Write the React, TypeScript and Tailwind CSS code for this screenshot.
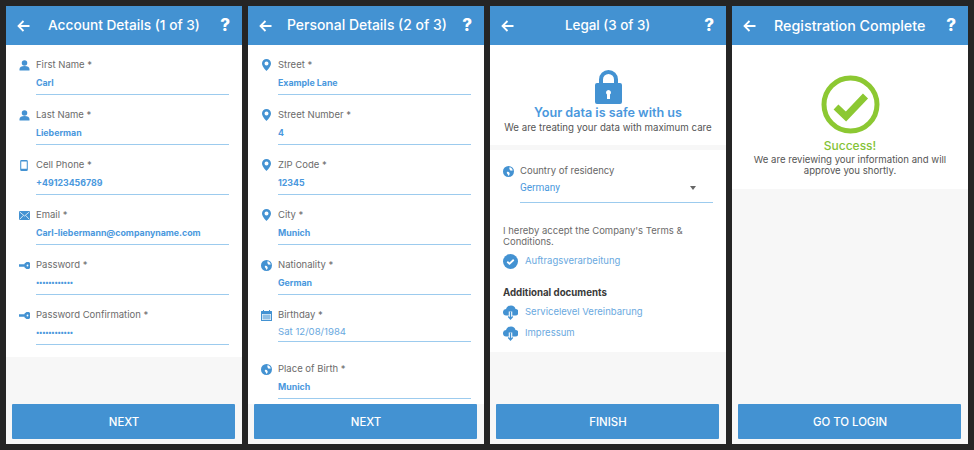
import React from "react";

const font = { fontFamily: "Inter, 'Noto Sans', sans-serif" };

const I = ({ children, w = 12, h = 12, vb = "0 0 24 24" }: { children: React.ReactNode; w?: number; h?: number; vb?: string }) => (
  <svg width={w} height={h} viewBox={vb} fill="#4392d2">{children}</svg>
);

const Person = () => (
  <I w={11} h={11} vb="0 0 22 22">
    <circle cx="11" cy="6" r="5.500" />
    <path d="M1 21v-3c0-4 4-6 10-6s10 2 10 6v3z" />
  </I>
);
const Phone = () => (
  <I w={8} h={11} vb="0 0 18 26">
    <path fillRule="evenodd" d="M3 0h12a3 3 0 0 1 3 3v20a3 3 0 0 1-3 3H3a3 3 0 0 1-3-3V3a3 3 0 0 1 3-3zm-.5 3.500v17h13v-17z" />
  </I>
);
const Mail = () => (
  <I w={11} h={9} vb="0 0 22 18">
    <rect width="22" height="18" rx="1.500" />
    <path d="M1.500 2 11 10l9.500-8M1.500 16.500l7-7.500M20.500 16.500l-7-7.500" fill="none" stroke="#fff" strokeWidth="1.500" />
  </I>
);
const Key = () => (
  <I w={11} h={7} vb="0 0 22 14">
    <path d="M0 4.500h11V3l4-3h5l2 2v10l-2 2h-5l-4-3V9.500H0z" />
    <circle cx="17" cy="7" r="1.800" fill="#fff" />
  </I>
);
const Pin = () => (
  <I w={9} h={12} vb="0 0 18 24">
    <path fillRule="evenodd" d="M9 0a9 9 0 0 1 9 9c0 6-9 15-9 15S0 15 0 9a9 9 0 0 1 9-9zm0 5a4 4 0 1 0 0 8 4 4 0 0 0 0-8z" />
  </I>
);
const Globe = () => (
  <I w={11} h={11} vb="0 0 22 22">
    <circle cx="11" cy="11" r="11" />
    <path d="M13 2.500c3 .5 6 3 6.500 6.500-2-.5-3 1-4.500 0s-3-3-2-6.500zM8 12c2-1 4 0 5 2s0 4-2 6c-1-2-1-3-2-4s-2-2-1-4z" fill="#fff" />
  </I>
);
const Calendar = () => (
  <I w={11} h={11} vb="0 0 22 22">
    <path fillRule="evenodd" d="M4 0h2v2h10V0h2v2h3a1 1 0 0 1 1 1v18a1 1 0 0 1-1 1H1a1 1 0 0 1-1-1V3a1 1 0 0 1 1-1h3zM2 8v12h18V8z" />
    <path d="M3 9h16v10H3z" opacity=".6" />
  </I>
);
const Check = () => (
  <svg width={15} height={15} viewBox="0 0 30 30">
    <circle cx="15" cy="15" r="15" fill="#4392d2" />
    <path d="M8.500 15.500l4.500 4 8.500-8" fill="none" stroke="#fff" strokeWidth="3.500" />
  </svg>
);
const Cloud = () => (
  <svg width={15} height={15} viewBox="0 0 30 30">
    <path d="M7 21a6.500 6.500 0 0 1-1-13C8 3 12 1 16 1c5 0 8 3 9 7a6.500 6.500 0 0 1-1 13z" fill="#4392d2" />
    <path d="M15 13v16" stroke="#fff" strokeWidth="7" />
    <path d="M15 13v15M10.500 23l4.500 5 4.500-5" stroke="#4392d2" strokeWidth="2.600" fill="none" />
  </svg>
);

const Field = ({ icon, label, value, dots }: { icon: React.ReactNode; label: string; value: string; dots?: boolean }) => (
  <div className="flex mb-[12px] pr-[13px]">
    <div className="w-[30px] h-4 flex items-center justify-center pl-[6px] shrink-0">{icon}</div>
    <div className="flex-1">
      <div className="h-4 text-[9.500px] leading-4 text-[#6b6b6b]">{label}</div>
      <div className={`h-[21px] leading-[19px] font-bold text-[#4a98dd] ${dots ? "text-[7px] tracking-[-0.25px]" : "text-[8.800px]"}`}>{value}</div>
      <div className="h-px bg-[#9ccbee]" />
    </div>
  </div>
);

const Header = ({ title, back = true, titleClass }: { title: string; back?: boolean; titleClass: string }) => (
  <div className="h-[39px] bg-[#4392d2] shrink-0 flex items-center text-white">
    <div className="w-[34px] flex justify-center shrink-0">
      {back && (
        <svg width="13" height="12" viewBox="0 0 13 12" fill="none" stroke="#fff" strokeWidth="1.800">
          <path d="M12.500 6H1.500M6.500 1 1.500 6l5 5" />
        </svg>
      )}
    </div>
    <div className={`font-medium whitespace-nowrap ${titleClass}`}>{title}</div>
    <div className="ml-auto mr-[12px] text-[17px] font-extrabold">?</div>
  </div>
);

const Panel = ({ header, footer, children }: { header: React.ReactNode; footer: string; children: React.ReactNode }) => (
  <div className="w-[236px] h-[438px] flex flex-col bg-[#f7f7f7] overflow-hidden">
    {header}
    <div className="flex-1 min-h-0 overflow-hidden">{children}</div>
    <div className="h-[40px] shrink-0 pl-[6px] pr-[7px]">
      <button className="w-full h-[35px] pl-px pt-[2px] bg-[#4392d2] rounded-[1px] text-white text-[11.400px] font-medium">{footer}</button>
    </div>
  </div>
);

const Legal = () => (
  <>
    <div className="bg-white h-[100px] flex flex-col items-center pt-[25px]">
      <svg width="27" height="34" viewBox="0 0 27 34">
        <path d="M6 15V9.500a7.500 7.500 0 0 1 15 0V15" fill="none" stroke="#4392d2" strokeWidth="4" />
        <path fillRule="evenodd" d="M2 13h23a2 2 0 0 1 2 2v17a2 2 0 0 1-2 2H2a2 2 0 0 1-2-2V15a2 2 0 0 1 2-2zm11.500 7a2.500 2.500 0 0 0-1.500 4.500V29h3v-4.500a2.500 2.500 0 0 0-1.500-4.500z" fill="#4392d2" />
      </svg>
      <div className="text-[12.600px] leading-4 mt-[1px] font-semibold text-[#4a98dd]">Your data is safe with us</div>
      <div className="text-[9.700px] leading-[14px] text-[#555]">We are treating your data with maximum care</div>
    </div>
    <div className="bg-white h-[202px] mt-[5px] px-[13px]">
      <div className="flex items-center pt-[13px] h-[29px]">
        <div className="w-[17px] shrink-0"><Globe /></div>
        <div className="text-[9.500px] text-[#666]">Country of residency</div>
      </div>
      <div className="ml-[17px] h-[24px] border-b border-[#9ccbee] flex items-center justify-between text-[10px] text-[#4a98dd] pr-[17px] pb-[6px]">
        <span style={{ fontFamily: "Roboto, sans-serif" }}>Germany</span>
        <span className="w-0 h-0 border-x-[3.500px] border-x-transparent border-t-[4px] border-t-[#666]" />
      </div>
      <div className="text-[9.500px] leading-[11px] mt-[22px] text-[#6b6b6b]">I hereby accept the Company's Terms &amp; Conditions.</div>
      <div className="flex items-center gap-[7px] mt-[7px] h-[15px]">
        <Check />
        <span className="text-[9.500px] text-[#6aa9e0]">Auftragsverarbeitung</span>
      </div>
      <div className="text-[9.700px] font-bold text-[#3a3a3a] mt-[16px] leading-4">Additional documents</div>
      <div className="flex items-center gap-[7px] mt-[4px] h-[15px]">
        <Cloud />
        <span className="text-[9.500px] text-[#6aa9e0]">Servicelevel Vereinbarung</span>
      </div>
      <div className="flex items-center gap-[7px] mt-[6px] h-[15px]">
        <Cloud />
        <span className="text-[9.500px] text-[#6aa9e0]">Impressum</span>
      </div>
    </div>
  </>
);

export default function App() {
  return (
    <div className="w-[974px] h-[450px] bg-[#252525] p-[6px] flex gap-[6px] overflow-hidden" style={font}>
      <Panel footer="NEXT" header={<Header title="Account Details (1 of 3)" titleClass="ml-[8px] text-[13.700px]" />}>
        <div className="bg-white pt-[12px] flow-root">
          <Field icon={<Person />} label="First Name *" value="Carl" />
          <Field icon={<Person />} label="Last Name *" value="Lieberman" />
          <Field icon={<Phone />} label="Cell Phone *" value="+49123456789" />
          <Field icon={<Mail />} label="Email *" value="Carl-liebermann@companyname.com" />
          <Field icon={<Key />} label="Password *" value="••••••••••••" dots />
          <Field icon={<Key />} label="Password Confirmation *" value="••••••••••••" dots />
        </div>
      </Panel>

      <Panel footer="NEXT" header={<Header title="Personal Details (2 of 3)" titleClass="ml-[5px] text-[13.950px]" />}>
        <div className="bg-white pt-[12px] h-full">
          <Field icon={<Pin />} label="Street *" value="Example Lane" />
          <Field icon={<Pin />} label="Street Number *" value="4" />
          <Field icon={<Pin />} label="ZIP Code *" value="12345" />
          <Field icon={<Pin />} label="City *" value="Munich" />
          <Field icon={<Globe />} label="Nationality *" value="German" />
          <div className="flex mb-[19px] pr-[13px]">
            <div className="w-[30px] h-4 flex items-center justify-center pl-[6px] shrink-0"><Calendar /></div>
            <div className="flex-1">
              <div className="h-4 text-[9.500px] leading-4 text-[#6b6b6b]">Birthday *</div>
              <div className="h-[18px] leading-[18px] text-[9.600px] text-[#6aa9e0]">Sat 12/08/1984</div>
              <div className="h-px bg-[#9ccbee]" />
            </div>
          </div>
          <Field icon={<Globe />} label="Place of Birth *" value="Munich" />
        </div>
      </Panel>

      <Panel footer="FINISH" header={<Header title="Legal (3 of 3)" titleClass="ml-[41px] text-[13.400px]" />}>
        <Legal />
      </Panel>

      <Panel footer="GO TO LOGIN" header={<Header title="Registration Complete" titleClass="ml-[8px] text-[14.300px]" />}>
        <div className="bg-white h-[144px] flex flex-col items-center pt-[30px]">
          <svg width="59" height="59" viewBox="0 0 59 59">
            <circle cx="29.500" cy="29.500" r="26.500" fill="none" stroke="#8cc832" strokeWidth="5" />
            <path d="M15 32l10 9.500L44.500 21" fill="none" stroke="#8cc832" strokeWidth="7" />
          </svg>
          <div className="text-[12px] leading-4 mt-[4px] font-medium text-[#84c336]">Success!</div>
          <div className="text-[9.600px] leading-[11px] text-[#555] text-center">We are reviewing your information and will<br />approve you shortly.</div>
        </div>
      </Panel>
    </div>
  );
}
